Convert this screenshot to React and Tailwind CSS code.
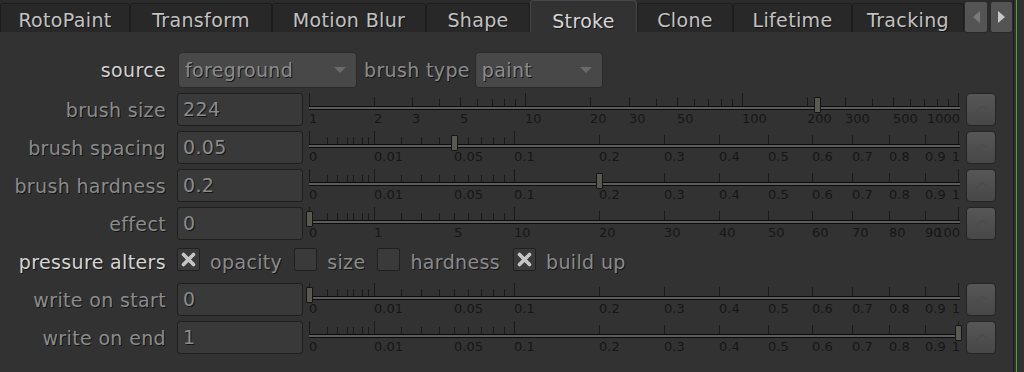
import React from 'react';

const FONT = "font-['DejaVu_Sans',sans-serif]";
const SHADOW = '[text-shadow:1px_1px_0_#141414]';

const logScale = (v) => Math.log10(v) / 3;
const sqrtScale = (max) => (v) => Math.sqrt(v / max);

function logTicks() {
  const t = [];
  for (const d of [1, 10, 100]) {
    for (let k = 1; k <= 9; k++) t.push([k * d, k === 1 ? 2 : k === 2 || k === 3 || k === 5 ? 1 : 0]);
  }
  t.push([1000, 2]);
  return t;
}

function sqrtTicks(max) {
  const t = [[0, 2]];
  for (const f of [0.0008, 0.0018, 0.0034, 0.0047, 0.0066, 0.0083]) t.push([f * max, 0]);
  t.push([0.01 * max, 2]);
  for (let k = 2; k <= 9; k++) t.push([k * 0.01 * max, 0]);
  t.push([0.1 * max, 2]);
  for (let k = 2; k <= 9; k++) t.push([k * 0.1 * max, 1]);
  t.push([max, 2]);
  return t;
}

const unitLabels = ['0', '0.01', '0.05', '0.1', '0.2', '0.3', '0.4', '0.5', '0.6', '0.7', '0.8', '0.9', '1'];
const effectLabels = ['0', '1', '5', '10', '20', '30', '40', '50', '60', '70', '80', '90', '100'];
const sizeLabels = ['1', '2', '3', '5', '10', '20', '30', '50', '100', '200', '300', '500', '1000'];

const SLIDERS = {
  size: { scale: logScale, ticks: logTicks(), labels: sizeLabels },
  unit: { scale: sqrtScale(1), ticks: sqrtTicks(1), labels: unitLabels },
  effect: { scale: sqrtScale(100), ticks: sqrtTicks(100), labels: effectLabels },
};

function Slider({ kind, value }) {
  const { scale, ticks, labels } = SLIDERS[kind];
  const x = (v) => 0.5 + scale(v) * 649;
  return (
    <div className="relative ml-[6px] h-[38px] w-[651px] shrink-0 tracking-normal">
      {ticks.map(([v, h], i) => (
        <div
          key={i}
          className={`absolute w-px bg-[#1a1a1a] ${
            h === 2 ? 'top-[1px] h-[13px]' : h === 1 ? 'top-[5px] h-[9px]' : 'top-[7px] h-[7px]'
          }`}
          style={{ left: Math.floor(x(v)) }}
        />
      ))}
      <div className="absolute left-0 right-0 top-[14px] h-[4px] border-y border-[#0c0c0c] bg-[#5c5c5c]" />
      {labels.map((l, i) =>
        i === labels.length - 1 ? (
          <span key={l} className="absolute right-0 top-[19px] text-[13px] leading-[15px] text-[#161616]">
            {l}
          </span>
        ) : (
          <span
            key={l}
            className="absolute top-[19px] text-[13px] leading-[15px] text-[#161616]"
            style={{ left: Math.floor(x(parseFloat(l))) }}
          >
            {l}
          </span>
        )
      )}
      {value !== undefined && (
        <div
          className="absolute top-[5px] h-[16px] w-[7px] rounded-[1px] border border-[#141414] bg-[#5a594f]"
          style={{ left: Math.round(x(value) - 3.5) }}
        />
      )}
    </div>
  );
}

function AnimButton() {
  return (
    <div className="ml-[6px] mt-[1px] flex h-[33px] w-[30px] shrink-0 items-center justify-center rounded-[4px] border border-[#242424] bg-linear-to-b from-[#575757] to-[#474747]">
      <svg width="16" height="12" viewBox="0 0 16 12">
        <path d="M2 9 C5 9 6 3 9 3 C11 3 12 6 14 4" fill="none" stroke="#4c4c4c" strokeWidth="1.5" />
      </svg>
    </div>
  );
}

function Label({ children, bright }) {
  return (
    <div
      className={`mt-[1px] h-[34px] w-[166px] shrink-0 whitespace-nowrap text-right leading-[34px] ${SHADOW} ${
        bright ? 'text-[#d4d4d4]' : 'text-[#8b8b8b]'
      }`}
    >
      {children}
    </div>
  );
}

function SliderRow({ label, value, kind, handle }) {
  return (
    <div className="flex h-[38px] items-start">
      <Label>{label}</Label>
      <div
        className={`ml-[11px] mt-[1px] h-[33px] w-[126px] shrink-0 rounded-[3px] border border-[#1e1e1e] bg-[#393939] pl-[5px] leading-[31px] text-[#8b8b8b] ${SHADOW}`}
      >
        {value}
      </div>
      <Slider kind={kind} value={handle} />
      <AnimButton />
    </div>
  );
}

function Dropdown({ text, width }) {
  return (
    <div
      className={`mt-[1px] flex h-[36px] shrink-0 items-center justify-between rounded-[4px] border border-[#2a2a2a] bg-[#484848] pl-[6px] pr-[10px] ${width}`}
    >
      <span className={`leading-[34px] text-[#8d8d8d] ${SHADOW}`}>{text}</span>
      <svg width="12" height="6" viewBox="0 0 12 6">
        <path d="M0 0 H12 L6 6 Z" fill="#6a6a6a" />
      </svg>
    </div>
  );
}

function Check({ checked }) {
  return (
    <div className="mt-[4px] flex h-[23px] w-[23px] shrink-0 items-center justify-center rounded-[2px] border border-[#1f1f1f] bg-[#3a3a3a]">
      {checked && (
        <svg width="15" height="15" viewBox="0 0 15 15">
          <path d="M2.5 2.5 L12.5 12.5 M12.5 2.5 L2.5 12.5" stroke="#c6c6c6" strokeWidth="3.6" strokeLinecap="round" />
        </svg>
      )}
    </div>
  );
}

const TABS = [
  ['RotoPaint', 'w-[130px]'],
  ['Transform', 'w-[142px]'],
  ['Motion Blur', 'w-[154px]'],
  ['Shape', 'w-[104px]'],
  ['Stroke', 'w-[107px]'],
  ['Clone', 'w-[96px]'],
  ['Lifetime', 'w-[119px]'],
  ['Tracking', 'w-[112px]'],
];

export default function App() {
  return (
    <div className={`flex h-[372px] w-[1024px] overflow-hidden bg-[#323232] text-[19px] tracking-[0.35px] ${FONT}`}>
      <div className="flex w-[1013px] shrink-0 flex-col">
        {/* tab bar */}
        <div className="flex h-[32px] items-end bg-[#2b2b2b]">
          {TABS.map(([name, w]) =>
            name === 'Stroke' ? (
              <div
                key={name}
                className={`h-[32px] shrink-0 rounded-t-[4px] border-x border-t border-[#474747] bg-[#323232] pt-[9px] text-center leading-[22px] text-[#d6d6d6] ${SHADOW} ${w}`}
              >
                {name}
              </div>
            ) : (
              <div
                key={name}
                className={`h-[29px] shrink-0 whitespace-nowrap rounded-t-[3px] border-x border-t border-[#1d1d1d] bg-[#282828] pt-[5px] text-center leading-[22px] text-[#c2c2c2] ${SHADOW} ${w}`}
              >
                {name}
              </div>
            )
          )}
          <div className="mb-auto mt-[1px] flex h-[32px] gap-[2px]">
            <div className="flex w-[24px] items-center justify-center rounded-[3px] border border-[#2a2a2a] bg-[#545454]">
              <svg width="7" height="12" viewBox="0 0 7 12">
                <path d="M7 0 V12 L0 6 Z" fill="#7a7a7a" />
              </svg>
            </div>
            <div className="flex w-[23px] items-center justify-center rounded-[3px] border border-[#2a2a2a] bg-[#545454]">
              <svg width="7" height="12" viewBox="0 0 7 12">
                <path d="M0 0 V12 L7 6 Z" fill="#c8c8c8" />
              </svg>
            </div>
          </div>
        </div>

        {/* knobs */}
        <div className="pt-[19px]">
          <div className="flex h-[41px] items-start">
            <div className={`h-[36px] w-[166px] shrink-0 text-right leading-[38px] text-[#d2d2d2] ${SHADOW}`}>source</div>
            <div className="ml-[12px]">
              <Dropdown text="foreground" width="w-[179px]" />
            </div>
            <div className={`ml-[7px] h-[36px] whitespace-nowrap leading-[38px] text-[#8b8b8b] ${SHADOW}`}>brush type</div>
            <div className="ml-[5px]">
              <Dropdown text="paint" width="w-[128px]" />
            </div>
          </div>

          <SliderRow label="brush size" value="224" kind="size" handle={224} />
          <SliderRow label="brush spacing" value="0.05" kind="unit" handle={0.05} />
          <SliderRow label="brush hardness" value="0.2" kind="unit" handle={0.2} />
          <SliderRow label="effect" value="0" kind="effect" handle={0} />

          <div className="flex h-[38px] items-start">
            <Label bright>pressure alters</Label>
            <div className="ml-[11px] flex items-start">
              <Check checked />
              <span className={`ml-[10px] mt-[1px] leading-[34px] text-[#8b8b8b] ${SHADOW}`}>opacity</span>
              <div className="ml-[12px]">
                <Check />
              </div>
              <span className={`ml-[10px] mt-[1px] leading-[34px] text-[#8b8b8b] ${SHADOW}`}>size</span>
              <div className="ml-[12px]">
                <Check />
              </div>
              <span className={`ml-[10px] mt-[1px] leading-[34px] text-[#8b8b8b] ${SHADOW}`}>hardness</span>
              <div className="ml-[13px]">
                <Check checked />
              </div>
              <span className={`ml-[10px] mt-[1px] leading-[34px] text-[#8b8b8b] ${SHADOW}`}>build up</span>
            </div>
          </div>

          <SliderRow label="write on start" value="0" kind="unit" handle={0} />
          <SliderRow label="write on end" value="1" kind="unit" handle={1} />
        </div>
      </div>

      {/* right edge */}
      <div className="w-px shrink-0 bg-[#1c1c1c]" />
      <div className="w-[2px] shrink-0" />
      <div className="w-px shrink-0 bg-[#47a447]" />
    </div>
  );
}
